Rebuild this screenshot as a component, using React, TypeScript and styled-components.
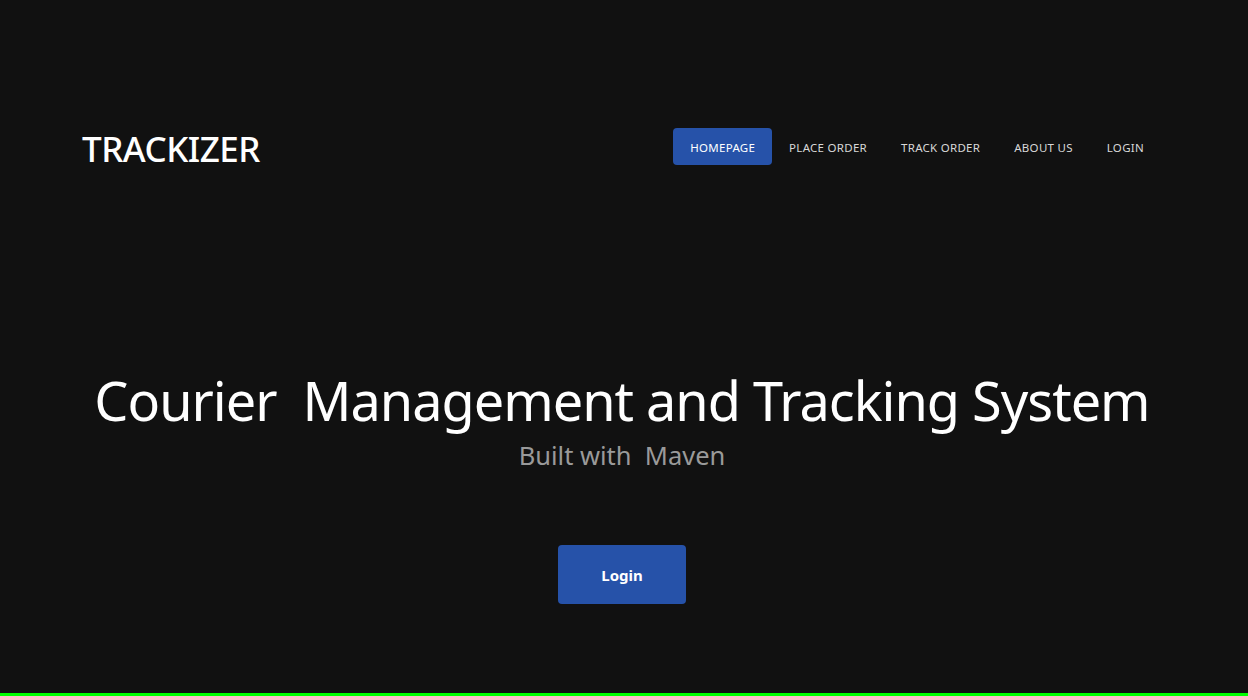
import React from "react";
import styled, { createGlobalStyle } from "styled-components";

const Global = createGlobalStyle`
  html, body { margin: 0; padding: 0; background: #111111; }
  * { box-sizing: border-box; }
`;

const Page = styled.div`
  min-height: 696px;
  height: 696px;
  background: #111111;
  border-bottom: 3px solid #00ff00;
  display: flex;
  flex-direction: column;
  font-family: "Noto Sans", sans-serif;
`;

const Header = styled.header`
  display: flex;
  align-items: flex-start;
  justify-content: space-between;
  padding: 128px 87px 0 82px;
`;

const Logo = styled.div`
  color: #ffffff;
  font-family: "Noto Sans", sans-serif;
  font-size: 35px;
  font-weight: 500;
  letter-spacing: -0.5px;
  line-height: 37px;
  padding-top: 2px;
`;

const Nav = styled.nav`
  display: flex;
  align-items: center;
`;

const NavLink = styled.a<{ $active?: boolean }>`
  display: flex;
  align-items: center;
  height: 37px;
  padding: 1px 17px 0;
  border-radius: 4px;
  background: ${(p) => (p.$active ? "#2652a9" : "transparent")};
  color: ${(p) => (p.$active ? "#ffffff" : "#d8d8d8")};
  font-family: "Noto Sans", sans-serif;
  font-size: 11.5px;
  letter-spacing: 0.28px;
  text-decoration: none;
  cursor: pointer;
`;

const Hero = styled.main`
  display: flex;
  flex-direction: column;
  align-items: center;
  padding-top: 202px;
  padding-right: 4px;
`;

const Title = styled.h1`
  margin: 0;
  color: #ffffff;
  font-family: "Noto Sans", sans-serif;
  font-weight: 400;
  font-size: 54px;
  line-height: 62px;
  letter-spacing: -1px;
  white-space: pre;
`;

const Subtitle = styled.p`
  margin: 7px 0 0;
  color: #9a9a9a;
  font-family: "Noto Sans", sans-serif;
  font-size: 25.5px;
  line-height: 34px;
  white-space: pre;
`;

const LoginButton = styled.button`
  margin-top: 73px;
  width: 128px;
  height: 59px;
  border: none;
  border-radius: 4px;
  background: #2652a9;
  color: #ffffff;
  font-family: "Noto Sans", sans-serif;
  font-weight: 700;
  font-size: 15px;
  cursor: pointer;
`;

export default function App() {
  const links = ["HOMEPAGE", "PLACE ORDER", "TRACK ORDER", "ABOUT US", "LOGIN"];
  return (
    <>
      <Global />
      <Page>
        <Header>
          <Logo>TRACKIZER</Logo>
          <Nav>
            {links.map((l, i) => (
              <NavLink key={l} $active={i === 0}>
                {l}
              </NavLink>
            ))}
          </Nav>
        </Header>
        <Hero>
          <Title>{"Courier  Management and Tracking System"}</Title>
          <Subtitle>{"Built with  Maven"}</Subtitle>
          <LoginButton>Login</LoginButton>
        </Hero>
      </Page>
    </>
  );
}
